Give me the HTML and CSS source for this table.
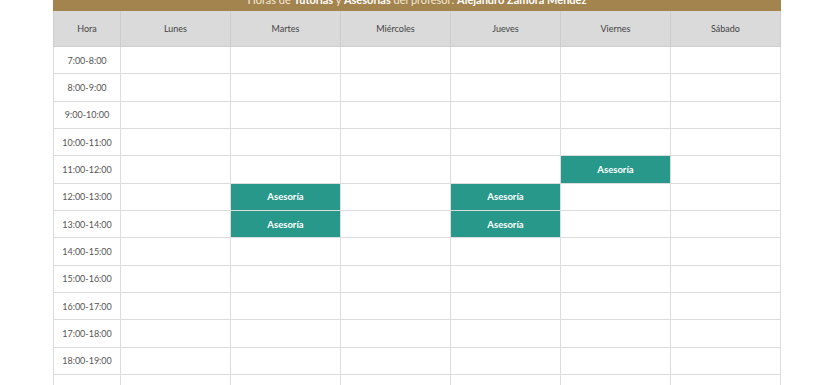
FILE: index.html
```html
<!DOCTYPE html>
<html lang="es">
<head>
<meta charset="utf-8">
<title>Horario</title>
<link rel="stylesheet" href="styles.css">
</head>
<body>
<div class="wrap">
  <div class="banner"><span>Horas de <b>Tutorías</b> y <b>Asesorías</b> del profesor: <b>Alejandro Zamora Méndez</b></span></div>
  <table class="sched">
    <colgroup>
      <col class="c-hora"><col class="c-day"><col class="c-day"><col class="c-day"><col class="c-day"><col class="c-day"><col class="c-day">
    </colgroup>
    <thead>
      <tr><th>Hora</th><th>Lunes</th><th>Martes</th><th>Miércoles</th><th>Jueves</th><th>Viernes</th><th>Sábado</th></tr>
    </thead>
    <tbody>
      <tr><td class="h">7:00-8:00</td><td></td><td></td><td></td><td></td><td></td><td></td></tr>
      <tr><td class="h">8:00-9:00</td><td></td><td></td><td></td><td></td><td></td><td></td></tr>
      <tr><td class="h">9:00-10:00</td><td></td><td></td><td></td><td></td><td></td><td></td></tr>
      <tr><td class="h">10:00-11:00</td><td></td><td></td><td></td><td></td><td></td><td></td></tr>
      <tr><td class="h">11:00-12:00</td><td></td><td></td><td></td><td></td><td class="ev">Asesoría</td><td></td></tr>
      <tr><td class="h">12:00-13:00</td><td></td><td class="ev">Asesoría</td><td></td><td class="ev">Asesoría</td><td></td><td></td></tr>
      <tr><td class="h">13:00-14:00</td><td></td><td class="ev">Asesoría</td><td></td><td class="ev">Asesoría</td><td></td><td></td></tr>
      <tr><td class="h">14:00-15:00</td><td></td><td></td><td></td><td></td><td></td><td></td></tr>
      <tr><td class="h">15:00-16:00</td><td></td><td></td><td></td><td></td><td></td><td></td></tr>
      <tr><td class="h">16:00-17:00</td><td></td><td></td><td></td><td></td><td></td><td></td></tr>
      <tr><td class="h">17:00-18:00</td><td></td><td></td><td></td><td></td><td></td><td></td></tr>
      <tr><td class="h">18:00-19:00</td><td></td><td></td><td></td><td></td><td></td><td></td></tr>
      <tr><td class="h">19:00-20:00</td><td></td><td></td><td></td><td></td><td></td><td></td></tr>
    </tbody>
  </table>
</div>
</body>
</html>
```
FILE: styles.css
```css
html, body {
  margin: 0;
  padding: 0;
  background: #ffffff;
  overflow: hidden;
}
body {
  font-family: Lato, "Open Sans", sans-serif;
  color: #444;
}
.wrap {
  width: 728px;
  margin-left: 53px;
}
.banner {
  background: #a3844e;
  height: 31px;
  margin-top: -20px;
  display: flex;
  align-items: flex-end;
  justify-content: center;
  color: #f3ead8;
  font-size: 11px;
  line-height: 14px;
  padding-bottom: 4px;
  box-sizing: border-box;
}
.banner b { font-weight: 700; color: #fff; }
.sched {
  width: 728px;
  border-collapse: collapse;
  table-layout: fixed;
}
.c-hora { width: 67px; }
.c-day { width: 110px; }
.sched th {
  background: #dadada;
  height: 35px;
  padding: 0;
  font-weight: 400;
  font-size: 9px;
  color: #444;
  border: 1px solid #cdcdcd;
  border-top: none;
}
.sched td {
  height: 26.33px;
  padding: 0;
  border: 1px solid #dcdcdc;
  text-align: center;
  font-size: 9px;
  color: #555;
}
.sched td.ev {
  background: #28988a;
  color: #ffffff;
  font-weight: 700;
  font-size: 9.5px;
  border-color: #dcdcdc;
}
```
